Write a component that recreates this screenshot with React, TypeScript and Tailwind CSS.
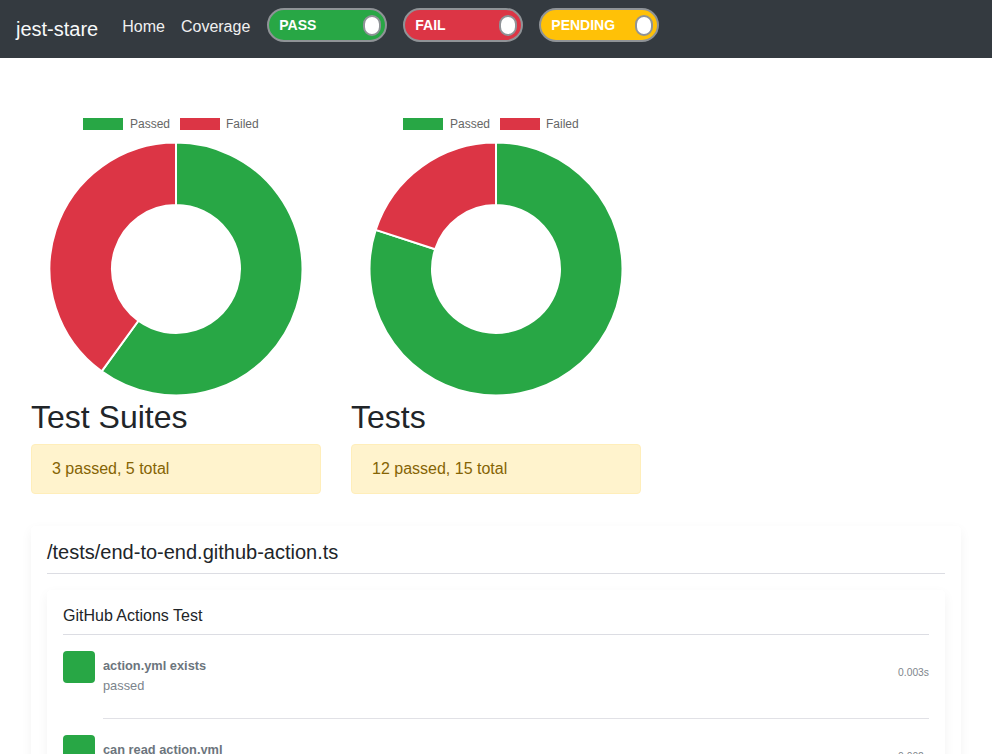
import React from 'react';

const GREEN = '#28a745';
const RED = '#dc3545';

// segment of a donut, angles in degrees clockwise from 12 o'clock
function arcPath(cx: number, cy: number, R: number, r: number, a0: number, a1: number) {
  const pt = (rad: number, a: number) => {
    const t = (a * Math.PI) / 180;
    return `${(cx + rad * Math.sin(t)).toFixed(2)} ${(cy - rad * Math.cos(t)).toFixed(2)}`;
  };
  const large = a1 - a0 > 180 ? 1 : 0;
  return `M ${pt(R, a0)} A ${R} ${R} 0 ${large} 1 ${pt(R, a1)} L ${pt(r, a1)} A ${r} ${r} 0 ${large} 0 ${pt(r, a0)} Z`;
}

function Donut({ passed, failed }: { passed: number; failed: number }) {
  const total = passed + failed;
  const split = (passed / total) * 360;
  return (
    <svg width="290" height="259" viewBox="0 0 290 259">
      <path d={arcPath(145, 130, 126.5, 64, 0, split)} fill={GREEN} stroke="#fff" strokeWidth="2" />
      <path d={arcPath(145, 130, 126.5, 64, split, 360)} fill={RED} stroke="#fff" strokeWidth="2" />
    </svg>
  );
}

function Legend() {
  return (
    <div className="flex items-center h-[12px] pl-[52px] text-[12px] text-[#666]">
      <span className="w-[40px] h-[12px] bg-[#28a745]" />
      <span className="ml-[7px] leading-[12px]">Passed</span>
      <span className="ml-[10px] w-[40px] h-[12px] bg-[#dc3545]" />
      <span className="ml-[6px] leading-[12px]">Failed</span>
    </div>
  );
}

function Summary({ title, text, passed, failed }: { title: string; text: string; passed: number; failed: number }) {
  return (
    <div className="w-[290px]">
      <Legend />
      <div className="mt-[9px]">
        <Donut passed={passed} failed={failed} />
      </div>
      <h2 className="text-[32px] leading-[38px] text-[#212529] mb-[8px]">{title}</h2>
      <div className="h-[50px] px-[20px] flex items-center rounded-[4px] border border-[#ffeeba] bg-[#fff3cd] text-[#856404] text-[16px]">
        {text}
      </div>
    </div>
  );
}

function Toggle({ label, color }: { label: string; color: string }) {
  return (
    <div
      className={`w-[120px] h-[34px] rounded-full border-2 border-[#8f9397] flex items-center justify-between pl-[10px] pr-[4px] ${color}`}
    >
      <span className="text-white font-bold text-[14px]">{label}</span>
      <span className="w-[18px] h-[21px] rounded-full bg-white border-2 border-[#8f9397]" />
    </div>
  );
}

function TestRow({ name, time }: { name: string; time: string }) {
  return (
    <div className="flex pt-[16px] text-[#6c757d]">
      <div className="w-[32px] h-[32px] rounded-[4px] bg-[#28a745] mr-[8px] shrink-0" />
      <div className="flex-1 flex border-b border-[#e1e1e6] pb-[22px]">
        <div className="flex-1 pt-[7px] text-[12.8px]">
          <strong className="block leading-[16px] font-bold">{name}</strong>
          <div className="leading-[20px] mt-[2px] text-[#7b848c]">passed</div>
        </div>
        <div className="text-[10.3px] text-[#80868c] pt-[14px]">{time}</div>
      </div>
    </div>
  );
}

export default function App() {
  return (
    <div className="min-h-screen bg-white" style={{ fontFamily: '"Liberation Sans", Arial, sans-serif' }}>
      <nav className="h-[58px] bg-[#343a40] flex items-start px-[16px]">
        <span className="mt-[14px] text-[20px] leading-[30px] text-[#f8f9fa]">jest-stare</span>
        <a className="ml-[16px] mt-[15px] px-[8px] text-[16px] leading-[24px] text-[#f0f0f0]">Home</a>
        <a className="mt-[15px] px-[8px] text-[16px] leading-[24px] text-[#f0f0f0]">Coverage</a>
        <div className="ml-[9px] mt-[8px] flex gap-[16px]">
          <Toggle label="PASS" color="bg-[#28a745]" />
          <Toggle label="FAIL" color="bg-[#dc3545]" />
          <Toggle label="PENDING" color="bg-[#ffc107]" />
        </div>
      </nav>

      <div className="px-[31px] pt-[60px]">
        <div className="flex gap-[30px]">
          <Summary title="Test Suites" text="3 passed, 5 total" passed={3} failed={2} />
          <Summary title="Tests" text="12 passed, 15 total" passed={12} failed={3} />
        </div>

        <div className="mt-[32px] rounded-[4px] bg-white px-[16px] pt-[14px] pb-[16px] shadow-[0_0.25rem_0.75rem_rgba(0,0,0,0.05)]">
          <h5 className="text-[20px] leading-[24px] text-[#212529] pb-[9px] border-b border-[#dcdde3]">
            /tests/end-to-end.github-action.ts
          </h5>
          <div className="mt-[16px] rounded-[4px] bg-white p-[16px] shadow-[0_0.25rem_0.75rem_rgba(0,0,0,0.05)]">
            <h6 className="text-[16px] leading-[20px] text-[#212529] pb-[8px] border-b border-[#dcdde3]">
              GitHub Actions Test
            </h6>
            <TestRow name="action.yml exists" time="0.003s" />
            <TestRow name="can read action.yml" time="0.002s" />
            <TestRow name="runs the action" time="0.012s" />
          </div>
        </div>
      </div>
    </div>
  );
}
